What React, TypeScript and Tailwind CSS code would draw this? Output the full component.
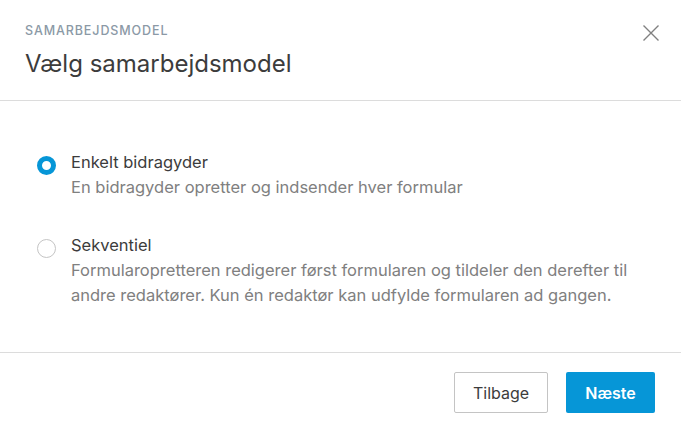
import { useState } from "react";

const options = [
  {
    id: "single",
    title: "Enkelt bidragyder",
    desc: "En bidragyder opretter og indsender hver formular",
  },
  {
    id: "seq",
    title: "Sekventiel",
    desc: "Formularopretteren redigerer først formularen og tildeler den derefter til andre redaktører. Kun én redaktør kan udfylde formularen ad gangen.",
  },
];

const App = () => {
  const [selected, setSelected] = useState("single");

  return (
    <div
      className="w-[681px] h-[430px] bg-white flex flex-col text-[#3c3c3c]"
      style={{ fontFamily: "Inter, 'Noto Sans', sans-serif" }}
    >
      <div className="flex justify-between items-start pl-[25px] pr-[22px] pt-[23px] h-[101px] border-b border-[#dcdcdc]">
        <div className="flex flex-col">
          <span className="text-[12.5px] leading-[16px] tracking-[0.9px] text-[#8b99a6] font-medium">
            SAMARBEJDSMODEL
          </span>
          <h1 className="text-[24px] leading-[30px] mt-[10px] text-[#3c3c3c]">
            Vælg samarbejdsmodel
          </h1>
        </div>
        <button className="text-[#808080] mt-[2px]">
          <svg width="16" height="16" viewBox="0 0 16 16" fill="none" stroke="currentColor" strokeWidth="1.4">
            <path d="M0.5 0.5l15 15M15.5 0.5l-15 15" />
          </svg>
        </button>
      </div>

      <div className="flex-1 flex flex-col gap-[33px] px-[37px] pt-[49px] border-b border-[#dcdcdc]">
        {options.map((o) => (
          <label key={o.id} className="flex items-start gap-[15px] cursor-pointer">
            <input
              type="radio"
              className="hidden"
              checked={selected === o.id}
              onChange={() => setSelected(o.id)}
            />
            <span
              className={`mt-[6px] shrink-0 w-[19px] h-[19px] rounded-full bg-white ${
                selected === o.id
                  ? "border-[5px] border-[#0696d7]"
                  : "border border-[#c4c4c4]"
              }`}
            ></span>
            <span className="flex flex-col text-[16.5px] leading-[25px]">
              <span className="text-[#3c3c3c]">{o.title}</span>
              <span className="text-[#808080] max-w-[575px]">{o.desc}</span>
            </span>
          </label>
        ))}
      </div>

      <div className="h-[77px] flex justify-end items-center gap-[18px] px-[26px] pt-[2px]">
        <button className="w-[94px] h-[41px] rounded-[2px] border border-[#c4c4c4] bg-white text-[16px] text-[#3c3c3c]">
          Tilbage
        </button>
        <button className="w-[89px] h-[41px] rounded-[2px] bg-[#0696d7] text-[16px] font-semibold text-white">
          Næste
        </button>
      </div>
    </div>
  );
};

export default App;
